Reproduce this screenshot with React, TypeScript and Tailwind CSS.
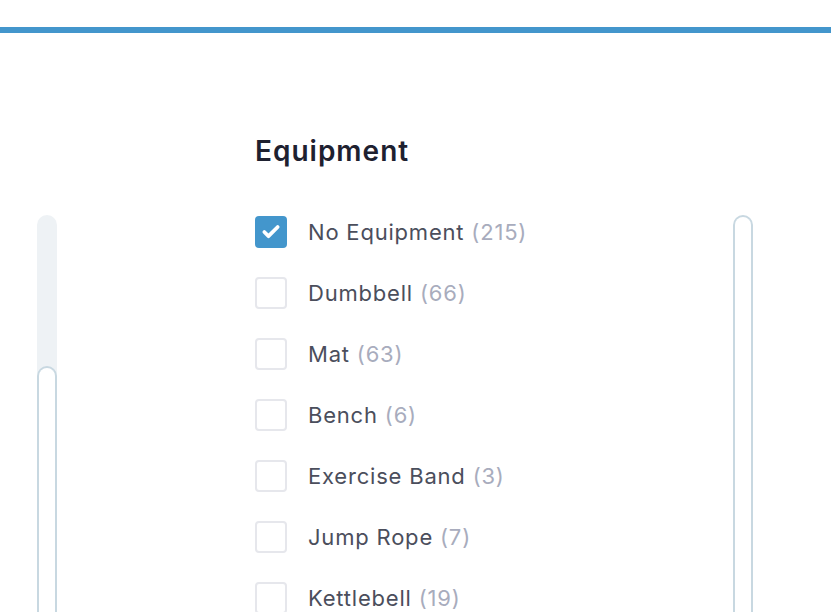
import { Check } from "lucide-react";

const items = [
  { label: "No Equipment", count: 215, checked: true },
  { label: "Dumbbell", count: 66 },
  { label: "Mat", count: 63 },
  { label: "Bench", count: 6 },
  { label: "Exercise Band", count: 3 },
  { label: "Jump Rope", count: 7 },
  { label: "Kettlebell", count: 19 },
];

function Row({ label, count, checked }: { label: string; count: number; checked?: boolean }) {
  return (
    <label className="flex items-center h-[61px] gap-[21px] cursor-pointer">
      {checked ? (
        <span className="w-8 h-8 rounded-[4px] bg-[#4396cc] flex items-center justify-center">
          <Check className="w-5 h-5 text-white" strokeWidth={4.5} />
        </span>
      ) : (
        <span className="w-8 h-8 rounded-[4px] border-2 border-[#e6e7ec] bg-white" />
      )}
      <span className="text-[22px] text-[#4b4e5c] tracking-[0.8px] pt-[2px]">
        {label} <span className="text-[#a8acbd]">({count})</span>
      </span>
    </label>
  );
}

export default function App() {
  return (
    <div className="h-[612px] w-[831px] overflow-hidden bg-white font-['Inter',sans-serif]">
      <div className="mt-[27px] h-[6px] bg-[#4396cc]" />
      <div className="flex">
        <div className="w-[255px] pl-[37px] pt-[182px]">
          <div className="w-5 h-[420px] rounded-t-full bg-[#eef2f5] pt-[151px]">
            <div className="h-full rounded-t-full border-2 border-b-0 border-[#c8d8e1] bg-white" />
          </div>
        </div>
        <div className="w-[478px] pt-[104px]">
          <h2 className="text-[28px] font-semibold text-[#1e2130] leading-none tracking-[1px]">Equipment</h2>
          <div className="mt-[36px]">
            {items.map((it) => (
              <Row key={it.label} {...it} />
            ))}
          </div>
        </div>
        <div className="pt-[182px]">
          <div className="w-5 h-[420px] rounded-t-full border-2 border-b-0 border-[#c8d8e1] bg-white" />
        </div>
      </div>
    </div>
  );
}
